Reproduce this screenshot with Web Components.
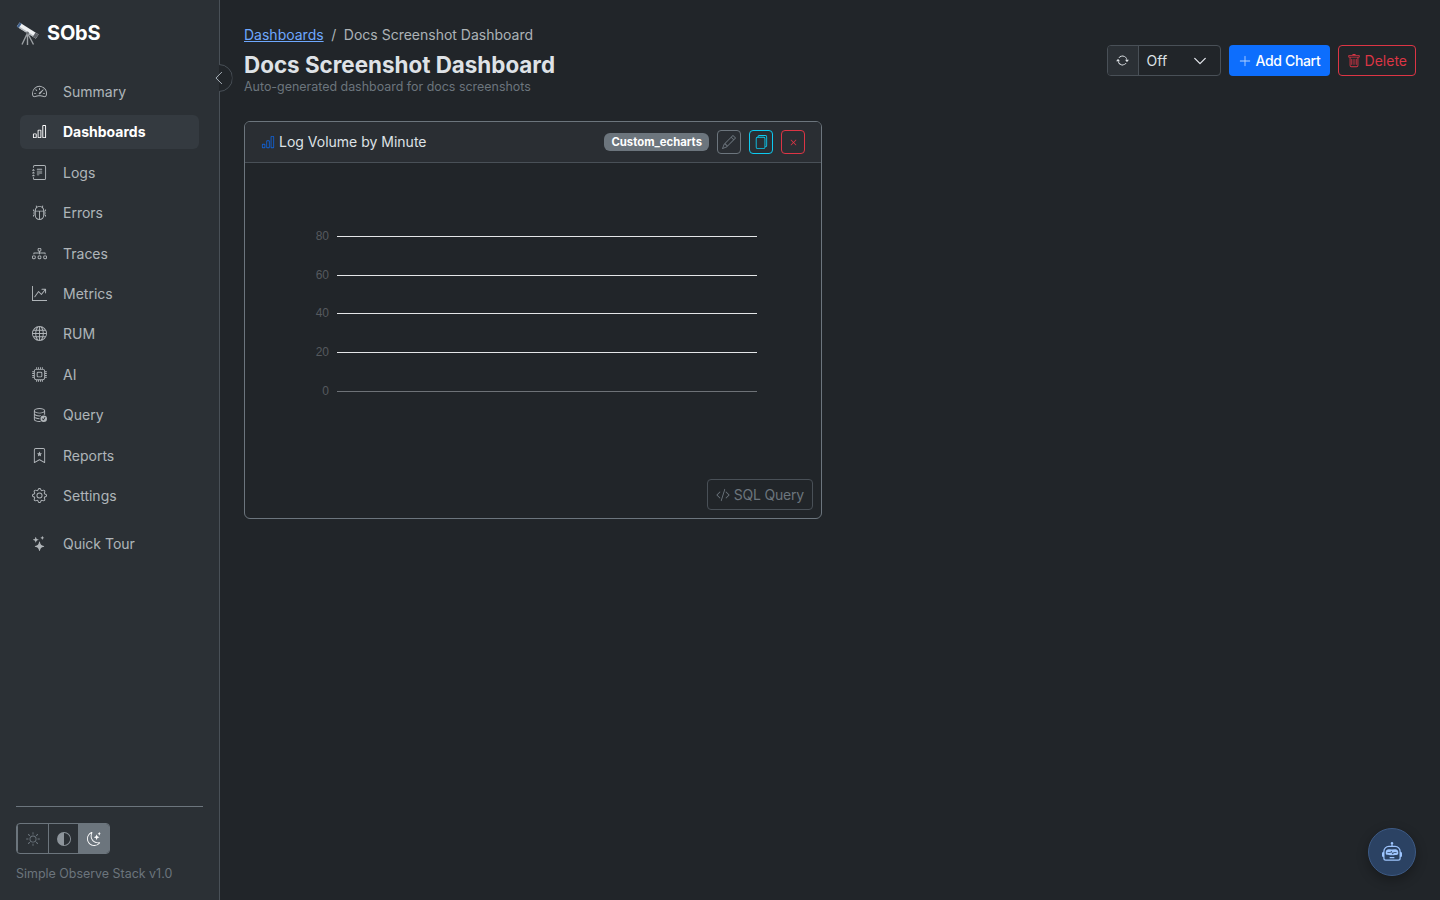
<!DOCTYPE html>
<html lang="en">
<head>
<meta charset="utf-8">
<title>SObS - Docs Screenshot Dashboard</title>
<style>
    html, body { margin: 0; height: 100%; background: #212529; }
    body { font-family: Inter, "Liberation Sans", sans-serif; color: #dee2e6; overflow: hidden; }
</style>
</head>
<body>
<sobs-app>
    <sobs-sidebar slot="sidebar">
        <sobs-nav-item icon="gauge">Summary</sobs-nav-item>
        <sobs-nav-item icon="bars" active>Dashboards</sobs-nav-item>
        <sobs-nav-item icon="journal">Logs</sobs-nav-item>
        <sobs-nav-item icon="bug">Errors</sobs-nav-item>
        <sobs-nav-item icon="diagram">Traces</sobs-nav-item>
        <sobs-nav-item icon="graph">Metrics</sobs-nav-item>
        <sobs-nav-item icon="globe">RUM</sobs-nav-item>
        <sobs-nav-item icon="cpu">AI</sobs-nav-item>
        <sobs-nav-item icon="database">Query</sobs-nav-item>
        <sobs-nav-item icon="bookmark">Reports</sobs-nav-item>
        <sobs-nav-item icon="gear">Settings</sobs-nav-item>
        <sobs-nav-item icon="stars" class="tour">Quick Tour</sobs-nav-item>
    </sobs-sidebar>
    <sobs-page-header>
        <span slot="crumb">Docs Screenshot Dashboard</span>
        <span slot="title">Docs Screenshot Dashboard</span>
        <span slot="sub">Auto-generated dashboard for docs screenshots</span>
    </sobs-page-header>
    <sobs-chart-card title="Log Volume by Minute" type="Custom_echarts"></sobs-chart-card>
    <sobs-bot-button></sobs-bot-button>
</sobs-app>

<script>
// bootstrap-icons style paths, all on a 16 box
const ICONS = {
    gauge: '<path d="M8 4a.5.5 0 0 1 .5.5V6a.5.5 0 0 1-1 0V4.5A.5.5 0 0 1 8 4M3.732 5.732a.5.5 0 0 1 .707 0l.915.914a.5.5 0 1 1-.708.708l-.914-.915a.5.5 0 0 1 0-.707M2 10a.5.5 0 0 1 .5-.5h1.586a.5.5 0 0 1 0 1H2.5A.5.5 0 0 1 2 10m9.5 0a.5.5 0 0 1 .5-.5h1.5a.5.5 0 0 1 0 1H12a.5.5 0 0 1-.5-.5m.754-4.246a.39.39 0 0 0-.527-.02L7.547 9.31a.91.91 0 1 0 1.302 1.258l3.434-4.297a.39.39 0 0 0-.029-.518z"/><path fill-rule="evenodd" d="M0 10a8 8 0 1 1 15.547 2.661c-.442 1.253-1.845 1.602-2.932 1.25C11.309 13.488 9.475 13 8 13c-1.474 0-3.31.488-4.615.911-1.087.352-2.49.003-2.932-1.25A8 8 0 0 1 0 10m8-7a7 7 0 0 0-6.603 9.329c.203.575.923.876 1.68.63C4.397 12.533 6.358 12 8 12s3.604.532 4.923.96c.757.245 1.477-.056 1.68-.631A7 7 0 0 0 8 3"/>',
    bars: '<path d="M4 11H2v3h2zm5-4H7v7h2zm5-5v12h-2V2zm-2-1a1 1 0 0 0-1 1v12a1 1 0 0 0 1 1h2a1 1 0 0 0 1-1V2a1 1 0 0 0-1-1zM6 7a1 1 0 0 1 1-1h2a1 1 0 0 1 1 1v7a1 1 0 0 1-1 1H7a1 1 0 0 1-1-1zm-5 4a1 1 0 0 1 1-1h2a1 1 0 0 1 1 1v3a1 1 0 0 1-1 1H2a1 1 0 0 1-1-1z"/>',
    journal: '<path d="M5 10.5a.5.5 0 0 1 .5-.5h2a.5.5 0 0 1 0 1h-2a.5.5 0 0 1-.5-.5m0-2a.5.5 0 0 1 .5-.5h5a.5.5 0 0 1 0 1h-5a.5.5 0 0 1-.5-.5m0-2a.5.5 0 0 1 .5-.5h5a.5.5 0 0 1 0 1h-5a.5.5 0 0 1-.5-.5m0-2a.5.5 0 0 1 .5-.5h5a.5.5 0 0 1 0 1h-5a.5.5 0 0 1-.5-.5"/><path d="M3 0h10a2 2 0 0 1 2 2v12a2 2 0 0 1-2 2H3a2 2 0 0 1-2-2v-1h1v1a1 1 0 0 0 1 1h10a1 1 0 0 0 1-1V2a1 1 0 0 0-1-1H3a1 1 0 0 0-1 1v1H1V2a2 2 0 0 1 2-2"/><path d="M1 5v-.5a.5.5 0 0 1 1 0V5h.5a.5.5 0 0 1 0 1h-2a.5.5 0 0 1 0-1zm0 3v-.5a.5.5 0 0 1 1 0V8h.5a.5.5 0 0 1 0 1h-2a.5.5 0 0 1 0-1zm0 3v-.5a.5.5 0 0 1 1 0v.5h.5a.5.5 0 0 1 0 1h-2a.5.5 0 0 1 0-1z"/>',
    bug: '<path d="M4.355.522a.5.5 0 0 1 .623.333l.291.956A5 5 0 0 1 8 1c1.007 0 1.946.298 2.731.811l.29-.956a.5.5 0 1 1 .957.29l-.41 1.352A5 5 0 0 1 13 6h.5a.5.5 0 0 0 .5-.5V5a.5.5 0 0 1 1 0v.5A1.5 1.5 0 0 1 13.5 7H13v1h1.5a.5.5 0 0 1 0 1H13v1h.5a1.5 1.5 0 0 1 1.5 1.5v.5a.5.5 0 1 1-1 0v-.5a.5.5 0 0 0-.5-.5H13a5 5 0 0 1-10 0h-.5a.5.5 0 0 0-.5.5v.5a.5.5 0 1 1-1 0v-.5A1.5 1.5 0 0 1 2.5 10H3V9H1.5a.5.5 0 0 1 0-1H3V7h-.5A1.5 1.5 0 0 1 1 5.5V5a.5.5 0 0 1 1 0v.5a.5.5 0 0 0 .5.5H3c0-1.364.547-2.601 1.432-3.503l-.41-1.352a.5.5 0 0 1 .333-.623M4 7v4a4 4 0 0 0 3.5 3.97V7zm4.5 0v7.97A4 4 0 0 0 12 11V7zM12 6a4 4 0 0 0-1.334-2.982A3.98 3.98 0 0 0 8 2a3.98 3.98 0 0 0-2.667 1.018A4 4 0 0 0 4 6z"/>',
    diagram: '<path fill-rule="evenodd" d="M6 3.5A1.5 1.5 0 0 1 7.5 2h1A1.5 1.5 0 0 1 10 3.5v1A1.5 1.5 0 0 1 8.5 6v1H14a.5.5 0 0 1 .5.5v1a.5.5 0 0 1-1 0V8h-5v.5a.5.5 0 0 1-1 0V8h-5v.5a.5.5 0 0 1-1 0v-1A.5.5 0 0 1 2 7h5.5V6A1.5 1.5 0 0 1 6 4.5zM8.5 5a.5.5 0 0 0 .5-.5v-1a.5.5 0 0 0-.5-.5h-1a.5.5 0 0 0-.5.5v1a.5.5 0 0 0 .5.5zM0 11.5A1.5 1.5 0 0 1 1.5 10h1A1.5 1.5 0 0 1 4 11.5v1A1.5 1.5 0 0 1 2.5 14h-1A1.5 1.5 0 0 1 0 12.5zm1.5-.5a.5.5 0 0 0-.5.5v1a.5.5 0 0 0 .5.5h1a.5.5 0 0 0 .5-.5v-1a.5.5 0 0 0-.5-.5zm4.5.5A1.5 1.5 0 0 1 7.5 10h1a1.5 1.5 0 0 1 1.5 1.5v1A1.5 1.5 0 0 1 8.5 14h-1A1.5 1.5 0 0 1 6 12.5zm1.5-.5a.5.5 0 0 0-.5.5v1a.5.5 0 0 0 .5.5h1a.5.5 0 0 0 .5-.5v-1a.5.5 0 0 0-.5-.5zm4.5.5a1.5 1.5 0 0 1 1.5-1.5h1a1.5 1.5 0 0 1 1.5 1.5v1a1.5 1.5 0 0 1-1.5 1.5h-1a1.5 1.5 0 0 1-1.5-1.5zm1.5-.5a.5.5 0 0 0-.5.5v1a.5.5 0 0 0 .5.5h1a.5.5 0 0 0 .5-.5v-1a.5.5 0 0 0-.5-.5z"/>',
    graph: '<path fill-rule="evenodd" d="M0 0h1v15h15v1H0zm10 3.5a.5.5 0 0 1 .5-.5h4a.5.5 0 0 1 .5.5v4a.5.5 0 0 1-1 0V4.9l-3.613 4.417a.5.5 0 0 1-.74.037L7.06 6.767l-3.656 5.027a.5.5 0 0 1-.808-.588l4-5.5a.5.5 0 0 1 .758-.06l2.609 2.61L13.445 4H10.5a.5.5 0 0 1-.5-.5"/>',
    globe: '<path d="M0 8a8 8 0 1 1 16 0A8 8 0 0 1 0 8m7.5-6.923c-.67.204-1.335.82-1.887 1.855A8 8 0 0 0 5.145 4H7.5zM4.09 4a9.3 9.3 0 0 1 .64-1.539 7 7 0 0 1 .597-.933A7.03 7.03 0 0 0 2.255 4zm-.582 3.5c.03-.877.138-1.718.312-2.5H1.674a7 7 0 0 0-.656 2.5zM4.847 5a12.5 12.5 0 0 0-.338 2.5H7.5V5zM8.5 5v2.5h2.99a12.5 12.5 0 0 0-.337-2.5zM4.51 8.5a12.5 12.5 0 0 0 .337 2.5H7.5V8.5zm3.99 0V11h2.653c.187-.765.306-1.608.338-2.5zM5.145 12q.208.58.468 1.068c.552 1.035 1.218 1.65 1.887 1.855V12zm.182 2.472a7 7 0 0 1-.597-.933A9.3 9.3 0 0 1 4.09 12H2.255a7 7 0 0 0 3.072 2.472M3.82 11a13.7 13.7 0 0 1-.312-2.5h-2.49c.062.89.291 1.733.656 2.5zm6.853 3.472A7 7 0 0 0 13.745 12H11.91a9.3 9.3 0 0 1-.64 1.539 7 7 0 0 1-.597.933M8.5 12v2.923c.67-.204 1.335-.82 1.887-1.855q.26-.487.468-1.068zm3.68-1h2.146c.365-.767.594-1.61.656-2.5h-2.49a13.7 13.7 0 0 1-.312 2.5m2.802-3.5a7 7 0 0 0-.656-2.5H12.18c.174.782.282 1.623.312 2.5zM11.27 2.461c.247.464.462.98.64 1.539h1.835a7 7 0 0 0-3.072-2.472c.218.284.418.598.597.933M10.855 4a8 8 0 0 0-.468-1.068C9.835 1.897 9.17 1.282 8.5 1.077V4z"/>',
    cpu: '<path d="M5 0a.5.5 0 0 1 .5.5V2h1V.5a.5.5 0 0 1 1 0V2h1V.5a.5.5 0 0 1 1 0V2h1V.5a.5.5 0 0 1 1 0V2A2.5 2.5 0 0 1 14 4.5h1.5a.5.5 0 0 1 0 1H14v1h1.5a.5.5 0 0 1 0 1H14v1h1.5a.5.5 0 0 1 0 1H14v1h1.5a.5.5 0 0 1 0 1H14a2.5 2.5 0 0 1-2.5 2.5v1.5a.5.5 0 0 1-1 0V14h-1v1.5a.5.5 0 0 1-1 0V14h-1v1.5a.5.5 0 0 1-1 0V14h-1v1.5a.5.5 0 0 1-1 0V14A2.5 2.5 0 0 1 2 11.5H.5a.5.5 0 0 1 0-1H2v-1H.5a.5.5 0 0 1 0-1H2v-1H.5a.5.5 0 0 1 0-1H2v-1H.5a.5.5 0 0 1 0-1H2A2.5 2.5 0 0 1 4.5 2V.5A.5.5 0 0 1 5 0m-.5 3A1.5 1.5 0 0 0 3 4.5v7A1.5 1.5 0 0 0 4.5 13h7a1.5 1.5 0 0 0 1.5-1.5v-7A1.5 1.5 0 0 0 11.5 3zM5 6.5A1.5 1.5 0 0 1 6.5 5h3A1.5 1.5 0 0 1 11 6.5v3A1.5 1.5 0 0 1 9.5 11h-3A1.5 1.5 0 0 1 5 9.5zM6.5 6a.5.5 0 0 0-.5.5v3a.5.5 0 0 0 .5.5h3a.5.5 0 0 0 .5-.5v-3a.5.5 0 0 0-.5-.5z"/>',
    database: '<path d="M12.5 16a3.5 3.5 0 1 0 0-7 3.5 3.5 0 0 0 0 7m1.679-4.493-1.335 2.226a.75.75 0 0 1-1.174.144l-.774-.773a.5.5 0 0 1 .708-.708l.547.548 1.17-1.951a.5.5 0 1 1 .858.514"/><path d="M12.096 6.223A5 5 0 0 0 13 5.698V7c0 .289-.213.654-.753 1.007a4.5 4.5 0 0 1 1.753.25V4c0-1.007-.875-1.755-1.904-2.223C11.022 1.289 9.573 1 8 1s-3.022.289-4.096.777C2.875 2.245 2 2.993 2 4v9c0 1.007.875 1.755 1.904 2.223C4.978 15.71 6.427 16 8 16c.536 0 1.058-.034 1.555-.097a4.5 4.5 0 0 1-.813-.927Q8.378 15 8 15c-1.464 0-2.766-.27-3.682-.687C3.356 13.875 3 13.373 3 13v-1.302c.271.202.58.378.904.525C4.978 12.71 6.427 13 8 13h.027a4.6 4.6 0 0 1 0-1H8c-1.464 0-2.766-.27-3.682-.687C3.356 10.875 3 10.373 3 10V8.698c.271.202.58.378.904.525C4.978 9.71 6.427 10 8 10q.393 0 .774-.024a4.5 4.5 0 0 1 1.102-1.132C9.298 8.944 8.666 9 8 9c-1.464 0-2.766-.27-3.682-.687C3.356 7.875 3 7.373 3 7V5.698c.271.202.58.378.904.525C4.978 6.711 6.427 7 8 7s3.022-.289 4.096-.777M3 4c0-.374.356-.875 1.318-1.313C5.234 2.271 6.536 2 8 2s2.766.27 3.682.687C12.644 3.125 13 3.627 13 4c0 .374-.356.875-1.318 1.313C10.766 5.729 9.464 6 8 6s-2.766-.27-3.682-.687C3.356 4.875 3 4.373 3 4"/>',
    bookmark: '<path d="M7.84 4.1a.178.178 0 0 1 .32 0l.634 1.285a.18.18 0 0 0 .134.098l1.42.206c.145.021.204.2.098.303L9.42 6.993a.18.18 0 0 0-.051.158l.242 1.414a.178.178 0 0 1-.258.187l-1.27-.668a.18.18 0 0 0-.165 0l-1.27.668a.178.178 0 0 1-.257-.187l.242-1.414a.18.18 0 0 0-.05-.158l-1.03-1.001a.178.178 0 0 1 .098-.303l1.42-.206a.18.18 0 0 0 .134-.098z"/><path d="M2 2a2 2 0 0 1 2-2h8a2 2 0 0 1 2 2v13.5a.5.5 0 0 1-.777.416L8 13.101l-5.223 2.815A.5.5 0 0 1 2 15.5zm2-1a1 1 0 0 0-1 1v12.566l4.723-2.482a.5.5 0 0 1 .554 0L13 14.566V2a1 1 0 0 0-1-1z"/>',
    gear: '<path d="M8 4.754a3.246 3.246 0 1 0 0 6.492 3.246 3.246 0 0 0 0-6.492M5.754 8a2.246 2.246 0 1 1 4.492 0 2.246 2.246 0 0 1-4.492 0"/><path d="M9.796 1.343c-.527-1.79-3.065-1.79-3.592 0l-.094.319a.873.873 0 0 1-1.255.52l-.292-.16c-1.64-.892-3.433.902-2.54 2.541l.159.292a.873.873 0 0 1-.52 1.255l-.319.094c-1.79.527-1.79 3.065 0 3.592l.319.094a.873.873 0 0 1 .52 1.255l-.16.292c-.892 1.64.901 3.434 2.541 2.54l.292-.159a.873.873 0 0 1 1.255.52l.094.319c.527 1.79 3.065 1.79 3.592 0l.094-.319a.873.873 0 0 1 1.255-.52l.292.16c1.64.893 3.434-.902 2.54-2.541l-.159-.292a.873.873 0 0 1 .52-1.255l.319-.094c1.79-.527 1.79-3.065 0-3.592l-.319-.094a.873.873 0 0 1-.52-1.255l.16-.292c.893-1.64-.902-3.433-2.541-2.54l-.292.159a.873.873 0 0 1-1.255-.52zm-2.633.283c.246-.835 1.428-.835 1.674 0l.094.319a1.873 1.873 0 0 0 2.693 1.115l.291-.16c.764-.415 1.6.42 1.184 1.185l-.159.292a1.873 1.873 0 0 0 1.116 2.692l.318.094c.835.246.835 1.428 0 1.674l-.319.094a1.873 1.873 0 0 0-1.115 2.693l.16.291c.415.764-.42 1.6-1.185 1.184l-.291-.159a1.873 1.873 0 0 0-2.693 1.116l-.094.318c-.246.835-1.428.835-1.674 0l-.094-.319a1.873 1.873 0 0 0-2.692-1.115l-.292.16c-.764.415-1.6-.42-1.184-1.185l.159-.291A1.873 1.873 0 0 0 1.945 8.93l-.319-.094c-.835-.246-.835-1.428 0-1.674l.319-.094A1.873 1.873 0 0 0 3.06 4.377l-.16-.292c-.415-.764.42-1.6 1.185-1.184l.292.159a1.873 1.873 0 0 0 2.692-1.115z"/>',
    stars: '<path d="M7.657 6.247c.11-.33.576-.33.686 0l.645 1.937a2.89 2.89 0 0 0 1.829 1.828l1.936.645c.33.11.33.576 0 .686l-1.937.645a2.89 2.89 0 0 0-1.828 1.829l-.645 1.936a.361.361 0 0 1-.686 0l-.645-1.937a2.89 2.89 0 0 0-1.828-1.828l-1.937-.645a.361.361 0 0 1 0-.686l1.937-.645a2.89 2.89 0 0 0 1.828-1.828zM3.794 1.148a.217.217 0 0 1 .412 0l.387 1.162c.173.518.579.924 1.097 1.097l1.162.387a.217.217 0 0 1 0 .412l-1.162.387A1.73 1.73 0 0 0 4.593 5.69l-.387 1.162a.217.217 0 0 1-.412 0L3.407 5.69A1.73 1.73 0 0 0 2.31 4.593l-1.162-.387a.217.217 0 0 1 0-.412l1.162-.387A1.73 1.73 0 0 0 3.407 2.31zM10.863.099a.145.145 0 0 1 .274 0l.258.774c.115.346.386.617.732.732l.774.258a.145.145 0 0 1 0 .274l-.774.258a1.16 1.16 0 0 0-.732.732l-.258.774a.145.145 0 0 1-.274 0l-.258-.774a1.16 1.16 0 0 0-.732-.732L9.1 2.137a.145.145 0 0 1 0-.274l.774-.258c.346-.115.617-.386.732-.732z"/>',
    sun: '<path d="M8 11a3 3 0 1 1 0-6 3 3 0 0 1 0 6m0 1a4 4 0 1 0 0-8 4 4 0 0 0 0 8M8 0a.5.5 0 0 1 .5.5v2a.5.5 0 0 1-1 0v-2A.5.5 0 0 1 8 0m0 13a.5.5 0 0 1 .5.5v2a.5.5 0 0 1-1 0v-2A.5.5 0 0 1 8 13m8-5a.5.5 0 0 1-.5.5h-2a.5.5 0 0 1 0-1h2a.5.5 0 0 1 .5.5M3 8a.5.5 0 0 1-.5.5h-2a.5.5 0 0 1 0-1h2A.5.5 0 0 1 3 8m10.657-5.657a.5.5 0 0 1 0 .707l-1.414 1.415a.5.5 0 1 1-.707-.708l1.414-1.414a.5.5 0 0 1 .707 0m-9.193 9.193a.5.5 0 0 1 0 .707L3.05 13.657a.5.5 0 0 1-.707-.707l1.414-1.414a.5.5 0 0 1 .707 0m9.193 2.121a.5.5 0 0 1-.707 0l-1.414-1.414a.5.5 0 0 1 .707-.707l1.414 1.414a.5.5 0 0 1 0 .707M4.464 4.465a.5.5 0 0 1-.707 0L2.343 3.05a.5.5 0 1 1 .707-.707l1.414 1.414a.5.5 0 0 1 0 .708"/>',
    half: '<path d="M8 15A7 7 0 1 0 8 1zm0 1A8 8 0 1 1 8 0a8 8 0 0 1 0 16"/>',
    moon: '<path d="M6 .278a.77.77 0 0 1 .08.858 7.2 7.2 0 0 0-.878 3.46c0 4.021 3.278 7.277 7.318 7.277q.792-.001 1.533-.16a.79.79 0 0 1 .81.316.73.73 0 0 1-.031.893A8.35 8.35 0 0 1 8.344 16C3.734 16 0 12.286 0 7.71 0 4.266 2.114 1.312 5.124.06A.75.75 0 0 1 6 .278M4.858 1.311A7.27 7.27 0 0 0 1.025 7.71c0 4.02 3.279 7.276 7.319 7.276a7.32 7.32 0 0 0 5.205-2.162q-.506.063-1.029.063c-4.61 0-8.343-3.714-8.343-8.29 0-1.167.242-2.278.681-3.286"/><path d="M10.794 3.148a.217.217 0 0 1 .412 0l.387 1.162c.173.518.579.924 1.097 1.097l1.162.387a.217.217 0 0 1 0 .412l-1.162.387a1.73 1.73 0 0 0-1.097 1.097l-.387 1.162a.217.217 0 0 1-.412 0l-.387-1.162A1.73 1.73 0 0 0 9.31 6.593l-1.162-.387a.217.217 0 0 1 0-.412l1.162-.387a1.73 1.73 0 0 0 1.097-1.097zM13.863.099a.145.145 0 0 1 .274 0l.258.774c.115.346.386.617.732.732l.774.258a.145.145 0 0 1 0 .274l-.774.258a1.16 1.16 0 0 0-.732.732l-.258.774a.145.145 0 0 1-.274 0l-.258-.774a1.16 1.16 0 0 0-.732-.732l-.774-.258a.145.145 0 0 1 0-.274l.774-.258c.346-.115.617-.386.732-.732z"/>',
    repeat: '<path d="M11.534 7h3.932a.25.25 0 0 1 .192.41l-1.966 2.36a.25.25 0 0 1-.384 0l-1.966-2.36a.25.25 0 0 1 .192-.41m-11 2h3.932a.25.25 0 0 0 .192-.41L2.692 6.23a.25.25 0 0 0-.384 0L.342 8.59A.25.25 0 0 0 .534 9"/><path fill-rule="evenodd" d="M8 3c-1.552 0-2.94.707-3.857 1.818a.5.5 0 1 1-.771-.636A6.002 6.002 0 0 1 13.917 7H12.9A5 5 0 0 0 8 3M3.1 9a5.002 5.002 0 0 0 8.757 2.182.5.5 0 1 1 .771.636A6.002 6.002 0 0 1 2.083 9z"/>',
    plus: '<path fill-rule="evenodd" d="M8 2a.5.5 0 0 1 .5.5v5h5a.5.5 0 0 1 0 1h-5v5a.5.5 0 0 1-1 0v-5h-5a.5.5 0 0 1 0-1h5v-5A.5.5 0 0 1 8 2"/>',
    trash: '<path d="M5.5 5.5A.5.5 0 0 1 6 6v6a.5.5 0 0 1-1 0V6a.5.5 0 0 1 .5-.5m2.5 0a.5.5 0 0 1 .5.5v6a.5.5 0 0 1-1 0V6a.5.5 0 0 1 .5-.5m3 .5a.5.5 0 0 0-1 0v6a.5.5 0 0 0 1 0z"/><path d="M14.5 3a1 1 0 0 1-1 1H13v9a2 2 0 0 1-2 2H5a2 2 0 0 1-2-2V4h-.5a1 1 0 0 1-1-1V2a1 1 0 0 1 1-1H6a1 1 0 0 1 1-1h2a1 1 0 0 1 1 1h3.5a1 1 0 0 1 1 1zM4.118 4 4 4.059V13a1 1 0 0 0 1 1h6a1 1 0 0 0 1-1V4.059L11.882 4zM2.5 3h11V2h-11z"/>',
    pencil: '<path d="M12.146.146a.5.5 0 0 1 .708 0l3 3a.5.5 0 0 1 0 .708l-10 10a.5.5 0 0 1-.168.11l-5 2a.5.5 0 0 1-.65-.65l2-5a.5.5 0 0 1 .11-.168zM11.207 2.5 13.5 4.793 14.793 3.5 12.5 1.207zm1.586 3L10.5 3.207 4 9.707V10h.5a.5.5 0 0 1 .5.5v.5h.5a.5.5 0 0 1 .5.5v.5h.293zm-9.761 5.175-.106.106-1.528 3.821 3.821-1.528.106-.106A.5.5 0 0 1 5 12.5V12h-.5a.5.5 0 0 1-.5-.5V11h-.5a.5.5 0 0 1-.468-.325"/>',
    files: '<path d="M13 0H6a2 2 0 0 0-2 2 2 2 0 0 0-2 2v10a2 2 0 0 0 2 2h7a2 2 0 0 0 2-2 2 2 0 0 0 2-2V2a2 2 0 0 0-2-2m0 13V4a2 2 0 0 0-2-2H5a1 1 0 0 1 1-1h7a1 1 0 0 1 1 1v10a1 1 0 0 1-1 1M3 4a1 1 0 0 1 1-1h7a1 1 0 0 1 1 1v10a1 1 0 0 1-1 1H4a1 1 0 0 1-1-1z"/>',
    x: '<path d="M4.646 4.646a.5.5 0 0 1 .708 0L8 7.293l2.646-2.647a.5.5 0 0 1 .708.708L8.707 8l2.647 2.646a.5.5 0 0 1-.708.708L8 8.707l-2.646 2.647a.5.5 0 0 1-.708-.708L7.293 8 4.646 5.354a.5.5 0 0 1 0-.708"/>',
    code: '<path d="M10.478 1.647a.5.5 0 1 0-.956-.294l-4 13a.5.5 0 0 0 .956.294zM4.854 4.146a.5.5 0 0 1 0 .708L1.707 8l3.147 3.146a.5.5 0 0 1-.708.708l-3.5-3.5a.5.5 0 0 1 0-.708l3.5-3.5a.5.5 0 0 1 .708 0m6.292 0a.5.5 0 0 0 0 .708L14.293 8l-3.147 3.146a.5.5 0 0 0 .708.708l3.5-3.5a.5.5 0 0 0 0-.708l-3.5-3.5a.5.5 0 0 0-.708 0"/>',
    robot: '<path d="M6 12.5a.5.5 0 0 1 .5-.5h3a.5.5 0 0 1 0 1h-3a.5.5 0 0 1-.5-.5M3 8.062C3 6.76 4.235 5.765 5.53 5.886a26.6 26.6 0 0 0 4.94 0C11.765 5.765 13 6.76 13 8.062v1.157a.93.93 0 0 1-.765.935c-.845.147-2.34.346-4.235.346s-3.39-.2-4.235-.346A.93.93 0 0 1 3 9.219zm4.542-.827a.25.25 0 0 0-.217.068l-.92.9a25 25 0 0 1-1.871-.183.25.25 0 0 0-.068.495c.55.076 1.232.149 2.02.193a.25.25 0 0 0 .189-.071l.754-.736.847 1.71a.25.25 0 0 0 .404.062l.932-.97a25 25 0 0 0 1.922-.188.25.25 0 0 0-.068-.495c-.538.074-1.207.145-1.98.189a.25.25 0 0 0-.166.076l-.754.785-.842-1.7a.25.25 0 0 0-.182-.135"/><path d="M8.5 1.866a1 1 0 1 0-1 0V3h-2A4.5 4.5 0 0 0 1 7.5V8a1 1 0 0 0-1 1v2a1 1 0 0 0 1 1v1a2 2 0 0 0 2 2h10a2 2 0 0 0 2-2v-1a1 1 0 0 0 1-1V9a1 1 0 0 0-1-1v-.5A4.5 4.5 0 0 0 10.5 3h-2zM14 7.5V13a1 1 0 0 1-1 1H3a1 1 0 0 1-1-1V7.5A3.5 3.5 0 0 1 5.5 4h5A3.5 3.5 0 0 1 14 7.5"/>'
}

const icon = (name, size) => `<svg width="${size}" height="${size}" viewBox="0 0 16 16" fill="currentColor">${ICONS[name]}</svg>`

class SobsApp extends HTMLElement {
    constructor() {
        super()
        this.attachShadow({mode: 'open'})
        this.shadowRoot.innerHTML = `
            <style>
                :host { display: flex; height: 100vh; }
                main { flex: 1; min-width: 0; padding: 24px 24px 0 24px; display: flex; flex-direction: column; }
            </style>
            <slot name="sidebar"></slot>
            <main><slot></slot></main>`
    }
}

class SobsSidebar extends HTMLElement {
    constructor() {
        super()
        this.attachShadow({mode: 'open'})
        this.shadowRoot.innerHTML = `
            <style>
                :host { display: flex; flex-direction: column; position: relative; box-sizing: border-box; width: 220px; height: 100vh; flex: none;
                    background: #2b3035; border-right: 1px solid #495057; padding: 0 16px; }
                .brand { display: flex; align-items: center; gap: 8px; height: 66px; box-sizing: border-box; color: #fff; font-size: 20px; font-weight: 700; letter-spacing: -0.2px; }
                nav { display: flex; flex-direction: column; padding: 0 4px; margin-top: 8.4px; }
                .toggle { position: absolute; top: 64px; left: 204.5px; box-sizing: border-box; width: 28px; height: 28px; border-radius: 50%;
                    background: #212529; border: 1px solid #495057; clip-path: inset(0 0 0 14.5px); }
                .chev { position: absolute; top: 71px; left: 212px; color: #adb5bd; line-height: 0; }
                .bottom { margin-top: auto; border-top: 1px solid #6c757d; padding-top: 16px; margin-bottom: 19px; }
                .ver { font-size: 12.45px; line-height: 14px; color: #6c757d; margin-top: 13px; }
            </style>
            <div class="brand">
                <svg width="23" height="23" viewBox="0 0 23 23">
                    <path d="M11.5 11 L6 22.5 M11.5 11 L11.5 23 M11.5 11 L17.5 22.5" stroke="#9ca0a4" stroke-width="1.4" fill="none"/>
                    <path d="M0.8 4.6 L3.6 0.4 L22.6 12.6 L19.8 16.6 Z" fill="#eef0f2"/>
                    <path d="M0.8 4.6 L3.6 0.4 L5.6 1.7 L2.8 5.9 Z" fill="#3f5f8a"/>
                    <path d="M2.8 5.9 L19.8 16.6 L20.6 15.4 L3.6 4.7 Z" fill="#b4b9be"/>
                    <path d="M19.4 10.5 L22.6 12.6 L19.8 16.6 L16.8 14.7 Z" fill="#5c6066"/>
                    <circle cx="11.5" cy="11" r="1.5" fill="#6d7176"/>
                </svg>
                <span>SObS</span>
            </div>
            <nav><slot></slot></nav>
            <span class="toggle"></span>
            <span class="chev"><svg width="14" height="14" viewBox="0 0 16 16" fill="none" stroke="currentColor" stroke-width="1.1" stroke-linecap="round" stroke-linejoin="round"><path d="M11 1.5 L4.5 8 L11 14.5"/></svg></span>
            <div class="bottom">
                <sobs-theme-switch></sobs-theme-switch>
                <div class="ver">Simple Observe Stack v1.0</div>
            </div>`
    }
}

class SobsNavItem extends HTMLElement {
    constructor() {
        super()
        this.attachShadow({mode: 'open'})
    }
    connectedCallback() {
        this.shadowRoot.innerHTML = `
            <style>
                :host { display: flex; align-items: center; gap: 16px; box-sizing: border-box; height: 34.4px; margin-bottom: 6px; padding: 0 12px;
                    border-radius: 6px; font-size: 14px; color: rgba(222,226,230,.75); font-weight: 400; }
                :host([active]) { background: #343a40; color: #fff; font-weight: 700; }
                :host(.tour) { margin-top: 7.4px; }
                .ico { display: flex; flex: none; width: 15px; height: 15px; }
            </style>
            <span class="ico">${icon(this.getAttribute('icon'), 15)}</span><slot></slot>`
    }
}

class SobsThemeSwitch extends HTMLElement {
    constructor() {
        super()
        this.attachShadow({mode: 'open'})
        this.shadowRoot.innerHTML = `
            <style>
                :host { display: flex; width: 94px; box-sizing: border-box; height: 31px; border: 1px solid #6c757d; border-radius: 4px; overflow: hidden; }
                span { display: flex; align-items: center; justify-content: center; flex: 1 1 0; color: #6c757d; border-left: 1px solid #6c757d; }
                span:first-child { border-left: 0; }
                .half { color: #8d949b; }
                .on { background: #6c757d; color: #fff; }
            </style>
            <span>${icon('sun', 14)}</span>
            <span class="half">${icon('half', 14)}</span>
            <span class="on">${icon('moon', 14)}</span>`
    }
}

class SobsPageHeader extends HTMLElement {
    constructor() {
        super()
        this.attachShadow({mode: 'open'})
        this.shadowRoot.innerHTML = `
            <style>
                :host { display: flex; justify-content: space-between; align-items: flex-start; height: 73px; margin-bottom: 24px; flex: none; }
                .crumbs { display: flex; gap: 7.6px; font-size: 14px; line-height: 21px; color: rgba(222,226,230,.75); }
                a { color: #6ea8fe; text-decoration: underline; }
                h1 { margin: 5px 0 0; font-size: 22.4px; line-height: 30px; font-weight: 700; color: #dee2e6; }
                .sub { font-size: 12.45px; line-height: 14px; color: #6c757d; }
                .actions { display: flex; gap: 8px; align-items: center; margin-top: 21px; }
                .group { display: flex; width: 114px; height: 31px; box-sizing: border-box; border: 1px solid #495057; border-radius: 4px; overflow: hidden; }
                .refresh { width: 30px; flex: none; display: flex; align-items: center; justify-content: center; background: #2b3035; border-right: 1px solid #495057; color: #dee2e6; }
                .sel { flex: 1; box-sizing: border-box; display: flex; align-items: center; justify-content: space-between; padding: 0 13px 0 8px; font-size: 14px; color: #dee2e6; }
                .btn { display: flex; align-items: center; gap: 4px; height: 31px; box-sizing: border-box; padding: 0 8px; border-radius: 4px; font-size: 14px; font-weight: 500; border: 1px solid transparent; }
                .add { background: #0d6efd; color: #fff; width: 101px; white-space: nowrap; letter-spacing: -.35px; }
                .add svg { color: #b6d4fe; }
                .del { border-color: #dc3545; color: #dc3545; font-weight: 400; }
            </style>
            <div>
                <div class="crumbs"><a>Dashboards</a><span>/</span><slot name="crumb"></slot></div>
                <h1><slot name="title"></slot></h1>
                <div class="sub"><slot name="sub"></slot></div>
            </div>
            <div class="actions">
                <div class="group">
                    <span class="refresh">${icon('repeat', 13)}</span>
                    <span class="sel">Off<svg width="14" height="14" viewBox="0 0 16 16" fill="none" stroke="currentColor" stroke-width="1.6" stroke-linecap="round" stroke-linejoin="round"><path d="M2 5l6 6 6-6"/></svg></span>
                </div>
                <span class="btn add">${icon('plus', 14)}Add Chart</span>
                <span class="btn del">${icon('trash', 14)}Delete</span>
            </div>`
    }
}

class SobsChartCard extends HTMLElement {
    constructor() {
        super()
        this.attachShadow({mode: 'open'})
    }
    connectedCallback() {
        const lines = [[80, 236, '#e4e6e8'], [60, 275, '#e4e6e8'], [40, 313, '#e4e6e8'], [20, 352, '#e4e6e8'], [0, 391, '#6e7277']]
        const grid = lines.map(([v, y, c]) => `
            <line x1="92" x2="512" y1="${y - 162.5}" y2="${y - 162.5}" stroke="${c}" stroke-width="1"/>
            <text x="84" y="${y - 159}" text-anchor="end">${v}</text>`).join('')
        this.shadowRoot.innerHTML = `
            <style>
                :host { display: flex; flex-direction: column; position: relative; box-sizing: border-box; width: 578px; height: 398px; flex: none;
                    border: 1px solid #6c757d; border-radius: 6px; overflow: hidden; }
                header { display: flex; align-items: center; height: 41px; flex: none; box-sizing: border-box; padding: 0 16px; background: #2a2e33; border-bottom: 1px solid #495057; }
                .name { display: flex; align-items: center; gap: 4px; flex: 1; font-size: 14px; line-height: 18px; font-weight: 400; color: #dee2e6; padding-bottom: 1px; }
                .name svg { color: #0d6efd; opacity: .8; }
                .badge { background: #6c757d; color: #fff; font-size: 11.3px; font-weight: 700; line-height: 18px; padding: 0 7px; border-radius: 6px; }
                .ib { display: flex; align-items: center; justify-content: center; width: 24px; height: 24px; box-sizing: border-box; border: 1px solid; border-radius: 4px; margin-left: 8px; }
                .edit { border-color: #6c757d; color: #6c757d; }
                .copy { border-color: #0dcaf0; color: #0dcaf0; }
                .close { border-color: #dc3545; color: #dc3545; }
                svg.chart { display: block; flex: 1; }
                svg.chart text { font: 12px "Liberation Sans", sans-serif; fill: #55595e; }
                .sql { position: absolute; right: 8px; bottom: 8px; display: flex; align-items: center; gap: 4px; height: 31px; box-sizing: border-box; padding: 0 8px;
                    border: 1px solid #495057; border-radius: 4px; font-size: 14px; color: #6c757d; letter-spacing: -.2px; }
            </style>
            <header>
                <span class="name">${icon('bars', 14)}${this.getAttribute('title')}</span>
                <span class="badge">${this.getAttribute('type')}</span>
                <span class="ib edit">${icon('pencil', 14)}</span>
                <span class="ib copy">${icon('files', 14)}</span>
                <span class="ib close">${icon('x', 13)}</span>
            </header>
            <svg class="chart" width="576" height="355">${grid}</svg>
            <span class="sql">${icon('code', 14)}SQL Query</span>`
    }
}

class SobsBotButton extends HTMLElement {
    constructor() {
        super()
        this.attachShadow({mode: 'open'})
        this.shadowRoot.innerHTML = `
            <style>
                :host { position: fixed; right: 24px; bottom: 24px; display: flex; align-items: center; justify-content: center; box-sizing: border-box; width: 48px; height: 48px;
                    border-radius: 50%; background: #2b4263; border: 1px solid #3d5a85; color: #9ec5fe; box-shadow: 0 4px 12px rgba(0,0,0,.3); }
            </style>
            ${icon('robot', 20)}`
    }
}

customElements.define('sobs-app', SobsApp)
customElements.define('sobs-sidebar', SobsSidebar)
customElements.define('sobs-nav-item', SobsNavItem)
customElements.define('sobs-theme-switch', SobsThemeSwitch)
customElements.define('sobs-page-header', SobsPageHeader)
customElements.define('sobs-chart-card', SobsChartCard)
customElements.define('sobs-bot-button', SobsBotButton)
</script>
</body>
</html>
